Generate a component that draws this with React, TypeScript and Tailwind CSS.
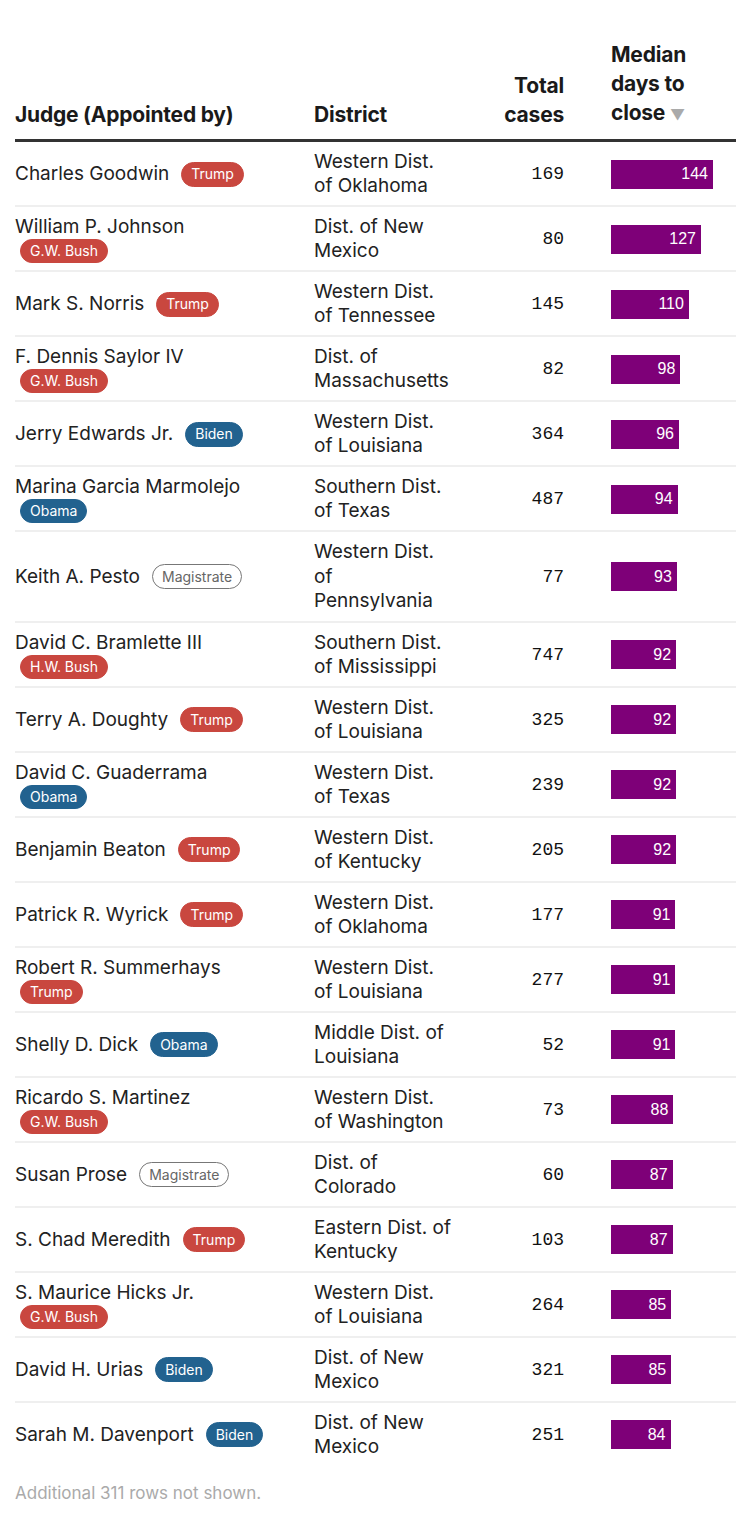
import React from 'react';

type Party = 'Trump' | 'G.W. Bush' | 'H.W. Bush' | 'Biden' | 'Obama' | 'Magistrate';

interface Row {
  judge: string;
  by: Party;
  wrap?: boolean;
  district: string[];
  cases: number;
  median: number;
}

const rows: Row[] = [
  { judge: 'Charles Goodwin', by: 'Trump', district: ['Western Dist.', 'of Oklahoma'], cases: 169, median: 144 },
  { judge: 'William P. Johnson', by: 'G.W. Bush', wrap: true, district: ['Dist. of New', 'Mexico'], cases: 80, median: 127 },
  { judge: 'Mark S. Norris', by: 'Trump', district: ['Western Dist.', 'of Tennessee'], cases: 145, median: 110 },
  { judge: 'F. Dennis Saylor IV', by: 'G.W. Bush', wrap: true, district: ['Dist. of', 'Massachusetts'], cases: 82, median: 98 },
  { judge: 'Jerry Edwards Jr.', by: 'Biden', district: ['Western Dist.', 'of Louisiana'], cases: 364, median: 96 },
  { judge: 'Marina Garcia Marmolejo', by: 'Obama', wrap: true, district: ['Southern Dist.', 'of Texas'], cases: 487, median: 94 },
  { judge: 'Keith A. Pesto', by: 'Magistrate', district: ['Western Dist.', 'of', 'Pennsylvania'], cases: 77, median: 93 },
  { judge: 'David C. Bramlette III', by: 'H.W. Bush', wrap: true, district: ['Southern Dist.', 'of Mississippi'], cases: 747, median: 92 },
  { judge: 'Terry A. Doughty', by: 'Trump', district: ['Western Dist.', 'of Louisiana'], cases: 325, median: 92 },
  { judge: 'David C. Guaderrama', by: 'Obama', wrap: true, district: ['Western Dist.', 'of Texas'], cases: 239, median: 92 },
  { judge: 'Benjamin Beaton', by: 'Trump', district: ['Western Dist.', 'of Kentucky'], cases: 205, median: 92 },
  { judge: 'Patrick R. Wyrick', by: 'Trump', district: ['Western Dist.', 'of Oklahoma'], cases: 177, median: 91 },
  { judge: 'Robert R. Summerhays', by: 'Trump', wrap: true, district: ['Western Dist.', 'of Louisiana'], cases: 277, median: 91 },
  { judge: 'Shelly D. Dick', by: 'Obama', district: ['Middle Dist. of', 'Louisiana'], cases: 52, median: 91 },
  { judge: 'Ricardo S. Martinez', by: 'G.W. Bush', wrap: true, district: ['Western Dist.', 'of Washington'], cases: 73, median: 88 },
  { judge: 'Susan Prose', by: 'Magistrate', district: ['Dist. of', 'Colorado'], cases: 60, median: 87 },
  { judge: 'S. Chad Meredith', by: 'Trump', district: ['Eastern Dist. of', 'Kentucky'], cases: 103, median: 87 },
  { judge: 'S. Maurice Hicks Jr.', by: 'G.W. Bush', wrap: true, district: ['Western Dist.', 'of Louisiana'], cases: 264, median: 85 },
  { judge: 'David H. Urias', by: 'Biden', district: ['Dist. of New', 'Mexico'], cases: 321, median: 85 },
  { judge: 'Sarah M. Davenport', by: 'Biden', district: ['Dist. of New', 'Mexico'], cases: 251, median: 84 },
];

const badgeStyle: Record<Party, string> = {
  Trump: 'bg-[#c9473f] text-white border-[#c9473f]',
  'G.W. Bush': 'bg-[#c9473f] text-white border-[#c9473f]',
  'H.W. Bush': 'bg-[#c9473f] text-white border-[#c9473f]',
  Biden: 'bg-[#22628f] text-white border-[#22628f]',
  Obama: 'bg-[#22628f] text-white border-[#22628f]',
  Magistrate: 'bg-white text-[#666] border-[#777]',
};

const Badge: React.FC<{ by: Party; block?: boolean }> = ({ by, block }) => (
  <span
    className={`${block ? 'flex w-fit h-[24px]' : 'inline-flex h-[25px]'} ml-[5px] items-center rounded-full border-[1.5px] px-[9px] text-[14px] leading-none align-middle ${badgeStyle[by]}`}
  >
    {by}
  </span>
);

export default function App() {
  return (
    <div className="bg-white px-[15px] pt-[40px] pb-[20px] text-[#222]" style={{ fontFamily: 'Inter, "Noto Sans", sans-serif' }}>
      {/* header */}
      <div className="flex items-end border-b-[3px] border-[#333] pb-[10px] text-[21px] font-bold leading-[29px] tracking-[-0.01em] text-[#1a1a1a]">
        <div className="w-[299px]">Judge (Appointed by)</div>
        <div className="flex-1">District</div>
        <div className="w-[100px] text-right">
          Total
          <br />
          cases
        </div>
        <div className="ml-[47px] w-[125px]">
          Median
          <br />
          days to
          <br />
          close <span className="text-[15px] font-normal text-[#aaa]">▼</span>
        </div>
      </div>

      {rows.map((r, i) => (
        <div
          key={r.judge}
          className={`flex items-center pt-[8px] pb-[7px] text-[19px] ${r.district.length > 2 ? 'leading-[24.5px]' : 'leading-[24px]'} ${i < rows.length - 1 ? 'border-b-2 border-[#efefef]' : ''}`}
        >
          <div className="w-[299px]">
            {r.wrap ? (
              <>
                <div>{r.judge}</div>
                <Badge by={r.by} block />
              </>
            ) : (
              <div className="flex items-center whitespace-nowrap">
                {r.judge}
                <span className="w-[7px]" />
                <Badge by={r.by} />
              </div>
            )}
          </div>
          <div className="flex-1">
            {r.district.map((d) => (
              <div key={d}>{d}</div>
            ))}
          </div>
          <div className="w-[100px] text-right text-[18px] text-[#111]" style={{ fontFamily: '"Liberation Mono", monospace' }}>
            {r.cases}
          </div>
          <div className="ml-[47px] w-[125px]">
            <div
              className="flex h-[29px] items-center justify-end bg-[#7e0078] pr-[5px] text-[16px] text-white"
              style={{ width: `${(r.median * 102) / 144}px`, fontFamily: '"Liberation Sans", Arial, sans-serif' }}
            >
              {r.median}
            </div>
          </div>
        </div>
      ))}

      <div className="mt-[15px] text-[17px] text-[#aaa]">Additional 311 rows not shown.</div>
    </div>
  );
}
